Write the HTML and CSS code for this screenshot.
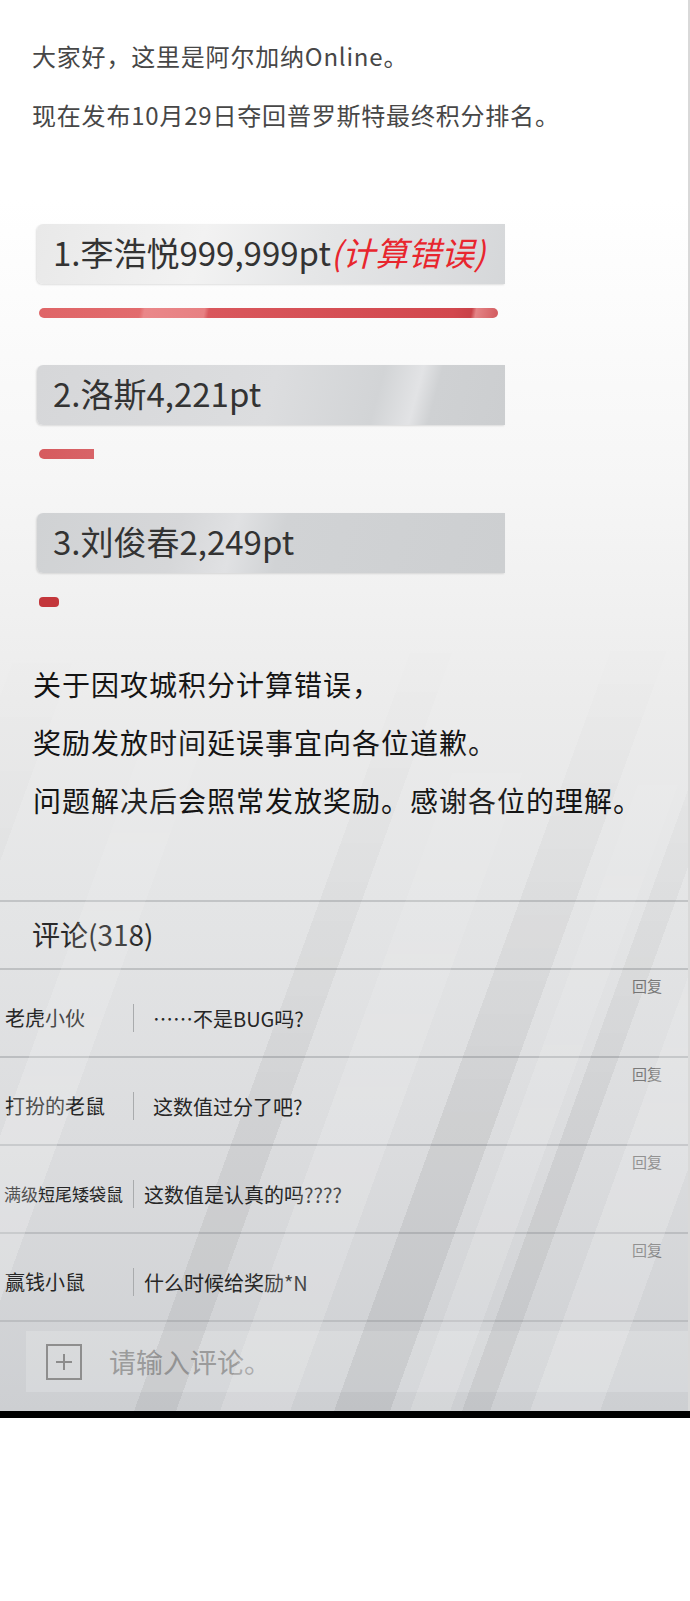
FILE: index.html
```html
<!DOCTYPE html>
<html>
<head>
  <title>阿尔加纳Online 公告</title>
  <meta name="viewport" content="width=device-width, initial-scale=1">
  <link rel="stylesheet" href="styles.css">
</head>
<body>
  <div class="panel">
    <div class="intro">
      <p>大家好，这里是阿尔加纳Online。</p>
      <p>现在发布10月29日夺回普罗斯特最终积分排名。</p>
    </div>

    <div class="ranking">
      <div class="rank rank-1">
        <div class="rank-box">1.李浩悦999,999pt<em class="error">(计算错误)</em></div>
        <div class="rank-bar" style="width: 459px"></div>
      </div>
      <div class="rank rank-2">
        <div class="rank-box">2.洛斯4,221pt</div>
        <div class="rank-bar" style="width: 55px"></div>
      </div>
      <div class="rank rank-3">
        <div class="rank-box">3.刘俊春2,249pt</div>
        <div class="rank-bar" style="width: 20px"></div>
      </div>
    </div>

    <div class="notice">
      <p>关于因攻城积分计算错误，</p>
      <p>奖励发放时间延误事宜向各位道歉。</p>
      <p>问题解决后会照常发放奖励。感谢各位的理解。</p>
    </div>

    <div class="comments">
      <div class="comments-title">评论(318)</div>
      <ul class="comment-list">
        <li class="comment">
          <div class="reply">回复</div>
          <div class="comment-line">
            <span class="name">老虎小伙</span>
            <span class="text">……不是BUG吗?</span>
          </div>
        </li>
        <li class="comment">
          <div class="reply">回复</div>
          <div class="comment-line">
            <span class="name">打扮的老鼠</span>
            <span class="text">这数值过分了吧?</span>
          </div>
        </li>
        <li class="comment">
          <div class="reply">回复</div>
          <div class="comment-line">
            <span class="name name-long">满级短尾矮袋鼠</span>
            <span class="text text-near">这数值是认真的吗????</span>
          </div>
        </li>
        <li class="comment">
          <div class="reply">回复</div>
          <div class="comment-line">
            <span class="name">赢钱小鼠</span>
            <span class="text text-near">什么时候给奖励*N</span>
          </div>
        </li>
      </ul>
      <div class="comment-input">
        <span class="add-btn">
          <svg width="18" height="18" viewBox="0 0 18 18"><path d="M9 1v16M1 9h16" stroke="#8c8c8c" stroke-width="2" fill="none"/></svg>
        </span>
        <span class="placeholder">请输入评论。</span>
      </div>
    </div>
  </div>
  <div class="black-bar"></div>
</body>
</html>
```

FILE: styles.css
```css
body {
  margin: 0;
  background-color: white;
  font-family: "Noto Sans CJK SC", "Noto Sans", sans-serif;
}
p {
  margin: 0;
}
.panel {
  position: relative;
  overflow: hidden;
  width: 690px;
  box-sizing: border-box;
  border-right: 2px solid #d9d9d9;
  padding-bottom: 19px;
  background: linear-gradient(to bottom, #ffffff 0px, #ffffff 200px, #f6f6f6 480px, #ececec 700px, #e4e5e6 900px, #dbdcde 1150px, #cdcfd2 1410px);
}
.panel::after {
  content: '';
  position: absolute;
  top: 0;
  bottom: 0;
  left: -700px;
  width: 1400px;
  transform: skewX(-20deg);
  transform-origin: bottom;
  pointer-events: none;
  background: linear-gradient(to right,
    transparent 0px,
    transparent 440px, rgba(0,0,0,0.035) 440px, rgba(0,0,0,0.035) 500px, transparent 500px,
    transparent 600px, rgba(255,255,255,0.2) 600px, rgba(255,255,255,0.2) 660px, transparent 660px,
    transparent 834px, rgba(0,0,0,0.05) 834px, rgba(0,0,0,0.05) 876px, transparent 876px,
    transparent 920px, rgba(255,255,255,0.16) 920px, rgba(255,255,255,0.16) 990px, transparent 990px,
    transparent 1034px, rgba(0,0,0,0.06) 1034px, rgba(0,0,0,0.06) 1090px, transparent 1090px,
    transparent 1110px, rgba(255,255,255,0.15) 1110px, rgba(255,255,255,0.15) 1150px, transparent 1150px,
    transparent 1162px, rgba(0,0,0,0.05) 1162px, rgba(0,0,0,0.05) 1190px, transparent 1190px,
    transparent 1230px, rgba(255,255,255,0.18) 1230px, rgba(255,255,255,0.18) 1300px, transparent 1300px);
  -webkit-mask-image: linear-gradient(to bottom, transparent 45%, black 80%);
  mask-image: linear-gradient(to bottom, transparent 45%, black 80%);
}
.intro {
  padding: 39px 0 0 32px;
  font-size: 24px;
  line-height: 34px;
  letter-spacing: 0.8px;
  color: #474747;
}
.intro p + p {
  margin-top: 25px;
}
.ranking {
  margin-top: 92px;
  padding-left: 37px;
}
.rank-2 {
  margin-top: 47px;
}
.rank-3 {
  margin-top: 54px;
}
.rank-box {
  width: 468px;
  height: 60px;
  box-sizing: border-box;
  padding: 0 0 4px 16px;
  display: flex;
  align-items: center;
  font-size: 33px;
  color: #333;
  border-radius: 6px 0 0 6px;
  box-shadow: -1px 1px 2px rgba(0, 0, 0, 0.12);
  background: linear-gradient(105deg, #e9e9e9 0%, #f2f2f2 35%, #e5e6e7 60%, #dcdddf 85%, #d5d7d9 100%);
}
.rank-2 .rank-box {
  background: linear-gradient(105deg, #d6d7d9 0%, #dcdddf 50%, #d2d4d6 72%, #e2e3e5 80%, #cfd1d3 84%, #ccced0 100%);
}
.rank-3 .rank-box {
  background: linear-gradient(105deg, #d0d2d4 0%, #d6d7d9 30%, #e0e1e3 42%, #d1d3d5 52%, #cdcfd1 100%);
}
.error {
  color: #e8262e;
  font-style: italic;
}
.rank-bar {
  height: 10px;
  margin: 24px 0 0 2px;
  border-radius: 5px;
  background: linear-gradient(100deg, #df6567 0%, #e26b6d 22%, #ea8789 23%, #e78082 36%, #d9575c 37%, #d2484e 90%, #c94248 94%, #e48486 95%, #d25a5e 100%);
}
.rank-2 .rank-bar {
  border-radius: 5px 0 0 5px;
  background: linear-gradient(to right, #d65a5e, #d86468);
}
.rank-3 .rank-bar {
  border-radius: 4px;
  background: #c3363b;
}
.notice {
  margin-top: 48px;
  padding-left: 33px;
  font-size: 28px;
  line-height: 58px;
  letter-spacing: 1px;
  color: #141414;
}
.comments {
  margin-top: 71px;
}
.comments-title {
  height: 66px;
  line-height: 64px;
  padding-left: 32px;
  font-size: 28px;
  color: #2a2a2a;
  border-top: 2px solid #c2c4c6;
  border-bottom: 2px solid #bfc1c3;
}
.comment-list {
  list-style: none;
  margin: 0;
  padding: 0;
}
.comment {
  height: 80px;
  padding-top: 6px;
  border-bottom: 2px solid #bcbec1;
}
.reply {
  height: 20px;
  padding-right: 26px;
  text-align: right;
  font-size: 15px;
  line-height: 20px;
  color: #7a7a7a;
}
.comment-line {
  height: 44px;
  display: flex;
  align-items: center;
  font-size: 20px;
  color: #262626;
}
.name {
  width: 134px;
  padding-left: 5px;
  box-sizing: border-box;
  border-right: 1px solid #a9abad;
  line-height: 28px;
  white-space: nowrap;
}
.name-long {
  font-size: 17px;
  padding-left: 4px;
}
.text {
  margin-left: 19px;
}
.text-near {
  margin-left: 10px;
}
.comment-input {
  margin: 9px 0 0 26px;
  height: 61px;
  display: flex;
  align-items: center;
  padding-left: 20px;
  background-color: rgba(255, 255, 255, 0.18);
}
.add-btn {
  width: 36px;
  height: 36px;
  box-sizing: border-box;
  border: 2px solid #8e8e8e;
  display: flex;
  align-items: center;
  justify-content: center;
}
.placeholder {
  margin-left: 27px;
  font-size: 27px;
  color: #9b9b9b;
}
.black-bar {
  width: 690px;
  height: 7px;
  background-color: black;
}
```
